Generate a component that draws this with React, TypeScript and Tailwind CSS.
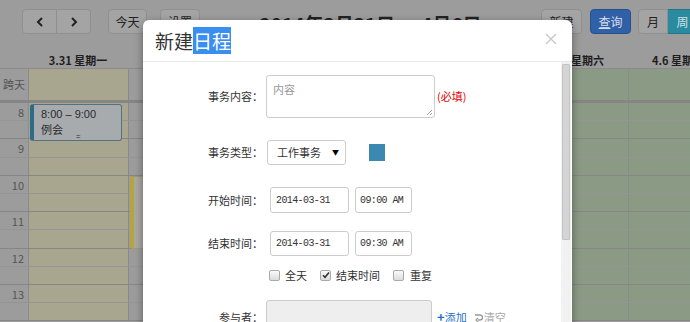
import React from "react";

const days = ["3.31 星期一", "4.1 星期二", "4.2 星期三", "4.3 星期四", "4.4 星期五", "4.5 星期六", "4.6 星期日"];
const colBg = ["bg-[#a9a690]", "bg-[#9c9c9c]", "bg-[#9c9c9c]", "bg-[#9c9c9c]", "bg-[#9c9c9c]", "bg-[#8b9a84]", "bg-[#8b9a84]"];
const hours = [8, 9, 10, 11, 12, 13];

function Btn({ children, className = "" }: { children: React.ReactNode; className?: string }) {
  return (
    <div className={`h-[25px] flex items-center justify-center border border-[#8f8f8f] text-[12px] text-[#222] ${className}`}>
      {children}
    </div>
  );
}

function Checkbox({ checked }: { checked?: boolean }) {
  return (
    <div className="w-[11px] h-[11px] rounded-[2px] border border-[#a9a9a9] bg-gradient-to-b from-[#fafafa] to-[#dcdcdc] flex items-center justify-center">
      {checked && (
        <svg width="8" height="8" viewBox="0 0 8 8">
          <path d="M1 4.2 L3 6.2 L7 1.5" fill="none" stroke="#333" strokeWidth="1.6" />
        </svg>
      )}
    </div>
  );
}

export default function App() {
  return (
    <div className="relative w-[690px] h-[322px] overflow-hidden bg-[#9c9c9c] font-['Noto_Sans_CJK_SC','Noto_Sans',sans-serif]">
      <div className="w-[750px]">
        {/* toolbar */}
        <div className="w-[728px] h-[51px] pl-[22px] pt-[9px] flex items-start">
          <div className="flex">
            <Btn className="w-[35px] rounded-l-[4px] bg-[#a4a4a4]">
              <svg width="8" height="10" viewBox="0 0 8 10"><path d="M6 1 L2 5 L6 9" fill="none" stroke="#222" strokeWidth="2" /></svg>
            </Btn>
            <Btn className="w-[34px] rounded-r-[4px] border-l-0 bg-[#a4a4a4]">
              <svg width="8" height="10" viewBox="0 0 8 10"><path d="M2 1 L6 5 L2 9" fill="none" stroke="#222" strokeWidth="2" /></svg>
            </Btn>
          </div>
          <Btn className="w-[39px] ml-[17px] rounded-[4px] bg-[#a4a4a4]">今天</Btn>
          <Btn className="w-[40px] ml-[13px] rounded-[4px] bg-[#a4a4a4]">设置</Btn>
          <div className="flex-1 text-center text-[19px] font-bold text-[#222] leading-[26px] mt-[2px]">2014年3月31日 — 4月6日</div>
          <div className="flex">
            <Btn className="w-[41px] rounded-[4px] bg-[#a4a4a4]">新建</Btn>
            <Btn className="w-[41px] ml-[8px] rounded-[4px] bg-[#3060a8] border-[#27508e] text-[#d8dde8]">
              <span className="underline">查</span>询
            </Btn>
            <Btn className="w-[30px] ml-[7px] rounded-l-[4px] bg-[#a4a4a4]">月</Btn>
            <Btn className="w-[30px] border-l-0 bg-[#2a8ba0] border-[#237487] text-[#d0e0e4]">周</Btn>
            <Btn className="w-[30px] border-l-0 rounded-r-[4px] bg-[#a4a4a4]">日</Btn>
          </div>
        </div>

        {/* calendar */}
        <div className="w-[728px]">
          <div className="flex h-[18px] border-b border-[#8a8a8a]">
            <div className="w-[28px]" />
            {days.map((d) => (
              <div key={d} className="w-[100px] text-center text-[11px] font-bold text-[#1e1e1e] leading-[18px]">{d}</div>
            ))}
          </div>
          <div className="flex h-[34px] border-b-[3px] border-[#858585]">
            <div className="w-[28px] text-[11px] text-[#555] flex items-center justify-end pr-[3px]">跨天</div>
            {colBg.map((c, i) => (
              <div key={i} className={`w-[100px] border-l border-[#8a8a8a] ${c}`} />
            ))}
          </div>
          <div className="relative">
            {hours.flatMap((h) => [0, 1].map((half) => (
              <div key={`${h}-${half}`} className={`flex h-[18.2px] border-b ${half === 0 ? "border-[#959595]" : "border-[#868686]"}`}>
                <div className="w-[28px] text-[11px] text-[#555] text-right pr-[4px] leading-[18px]">{half === 0 ? h : ""}</div>
                {colBg.map((c, i) => (
                  <div key={i} className={`w-[100px] border-l border-[#8a8a8a] ${c}`} />
                ))}
              </div>
            )))}
            {/* events */}
            <div className="absolute left-[30px] top-[1px] w-[92px] h-[37px] rounded-[3px] border border-[#55707f] border-l-[4px] border-l-[#2c6c86] bg-[#a7abae] px-[7px] text-[11px] text-[#2a2a2a] leading-[15px]">
              <div className="mt-[2px] font-['Liberation_Sans',sans-serif]">8:00 – 9:00</div>
              <div>例会</div>
              <div className="absolute left-[42px] bottom-[0px] text-[8px] leading-[8px]">=</div>
            </div>
            <div className="absolute left-[130px] top-[73px] w-[92px] h-[73px] rounded-[3px] border border-[#a09a70] border-l-[4px] border-l-[#b6a53a] bg-[#a9a8a2]" />
          </div>
        </div>
      </div>

      {/* modal */}
      <div className="absolute left-[143px] top-[20px] w-[429px] h-[320px] bg-white rounded-t-[6px] shadow-[0_3px_9px_rgba(0,0,0,0.4)] flex flex-col">
        <div className="h-[42px] border-b border-[#e8e8e8] flex items-center pl-[12px] pr-[15px] shrink-0">
          <div className="text-[19px] leading-[24px] text-[#333]">
            新建<span className="bg-[#3a8ef0] text-white">日程</span>
          </div>
          <div className="flex-1" />
          <svg width="12" height="12" viewBox="0 0 12 12" className="-mt-[4px]">
            <path d="M1 1 L11 11 M11 1 L1 11" stroke="#c8c8c8" strokeWidth="1.4" />
          </svg>
        </div>
        <div className="flex flex-1">
          <div className="flex-1 flex flex-col text-[11px] text-[#333]">
            {/* content */}
            <div className="flex items-center mt-[13px]">
              <div className="w-[120px] text-right">事务内容：</div>
              <div className="relative ml-[3px] w-[169px] h-[43px] border border-[#cccccc] rounded-[3px] px-[6px] py-[6px] text-[#999] leading-[14px]">
                内容
                <svg className="absolute right-[1px] bottom-[1px]" width="7" height="7" viewBox="0 0 7 7">
                  <path d="M6 1 L1 6 M6 4 L4 6" stroke="#888" strokeWidth="0.8" />
                </svg>
              </div>
              <div className="text-[#e60000] ml-[2px]">(必填)</div>
            </div>
            {/* type */}
            <div className="flex items-center mt-[22px]">
              <div className="w-[120px] text-right">事务类型：</div>
              <div className="ml-[4px] w-[79px] h-[25px] border border-[#cccccc] rounded-[3px] flex items-center pl-[9px] pr-[6px]">
                <span>工作事务</span>
                <span className="flex-1" />
                <span className="text-[7px] text-black">▼</span>
              </div>
              <div className="ml-[23px] w-[16px] h-[17px] bg-[#3b89b1]" />
            </div>
            {/* start */}
            <div className="flex items-center mt-[22px]">
              <div className="w-[120px] text-right">开始时间：</div>
              <div className="ml-[7px] w-[79px] h-[26px] border border-[#cccccc] rounded-[3px] flex items-center pl-[5px] font-['Liberation_Mono',monospace] text-[10px] tracking-[-0.6px]">2014-03-31</div>
              <div className="ml-[6px] w-[57px] h-[26px] border border-[#cccccc] rounded-[3px] flex items-center pl-[4px] font-['Liberation_Mono',monospace] text-[10px] tracking-[-0.6px]">09:00 AM</div>
            </div>
            {/* end */}
            <div className="flex items-center mt-[18px]">
              <div className="w-[120px] text-right">结束时间：</div>
              <div className="ml-[7px] w-[79px] h-[25px] border border-[#cccccc] rounded-[3px] flex items-center pl-[5px] font-['Liberation_Mono',monospace] text-[10px] tracking-[-0.6px]">2014-03-31</div>
              <div className="ml-[6px] w-[57px] h-[25px] border border-[#cccccc] rounded-[3px] flex items-center pl-[4px] font-['Liberation_Mono',monospace] text-[10px] tracking-[-0.6px]">09:30 AM</div>
            </div>
            {/* checkboxes */}
            <div className="flex items-center mt-[12px] ml-[126px] h-[14px]">
              <Checkbox />
              <span className="ml-[5px]">全天</span>
              <span className="ml-[13px]"><Checkbox checked /></span>
              <span className="ml-[5px]">结束时间</span>
              <span className="ml-[13px]"><Checkbox /></span>
              <span className="ml-[6px]">重复</span>
            </div>
            {/* participants */}
            <div className="flex items-start mt-[18px]">
              <div className="w-[120px] text-right mt-[9px]">参与者：</div>
              <div className="ml-[3px] w-[166px] h-[50px] border border-[#cccccc] rounded-[3px] bg-[#eeeeee]" />
              <div className="ml-[5px] mt-[9px] flex items-center text-[#2a6fc9]">
                <span className="font-bold text-[13px] leading-[12px]">+</span>
                <span>添加</span>
                <span className="ml-[7px] flex items-center text-[#aaa]">
                  <svg width="9" height="9" viewBox="0 0 9 9">
                    <path d="M1 2 H6 A2.5 2.5 0 0 1 6 7 H4" fill="none" stroke="#999" strokeWidth="1.4" />
                    <path d="M4 5 L2 7 L4 9" fill="none" stroke="#999" strokeWidth="1.2" />
                  </svg>
                  <span className="ml-[1px]">清空</span>
                </span>
              </div>
            </div>
          </div>
          {/* scrollbar */}
          <div className="w-[10px] mr-[1px] bg-[#f1f1f1] relative">
            <div className="absolute left-[1px] right-[1px] top-[2px] h-[176px] bg-[#d4d4d4] border border-[#c4c4c4] rounded-[1px]" />
          </div>
        </div>
      </div>
    </div>
  );
}
